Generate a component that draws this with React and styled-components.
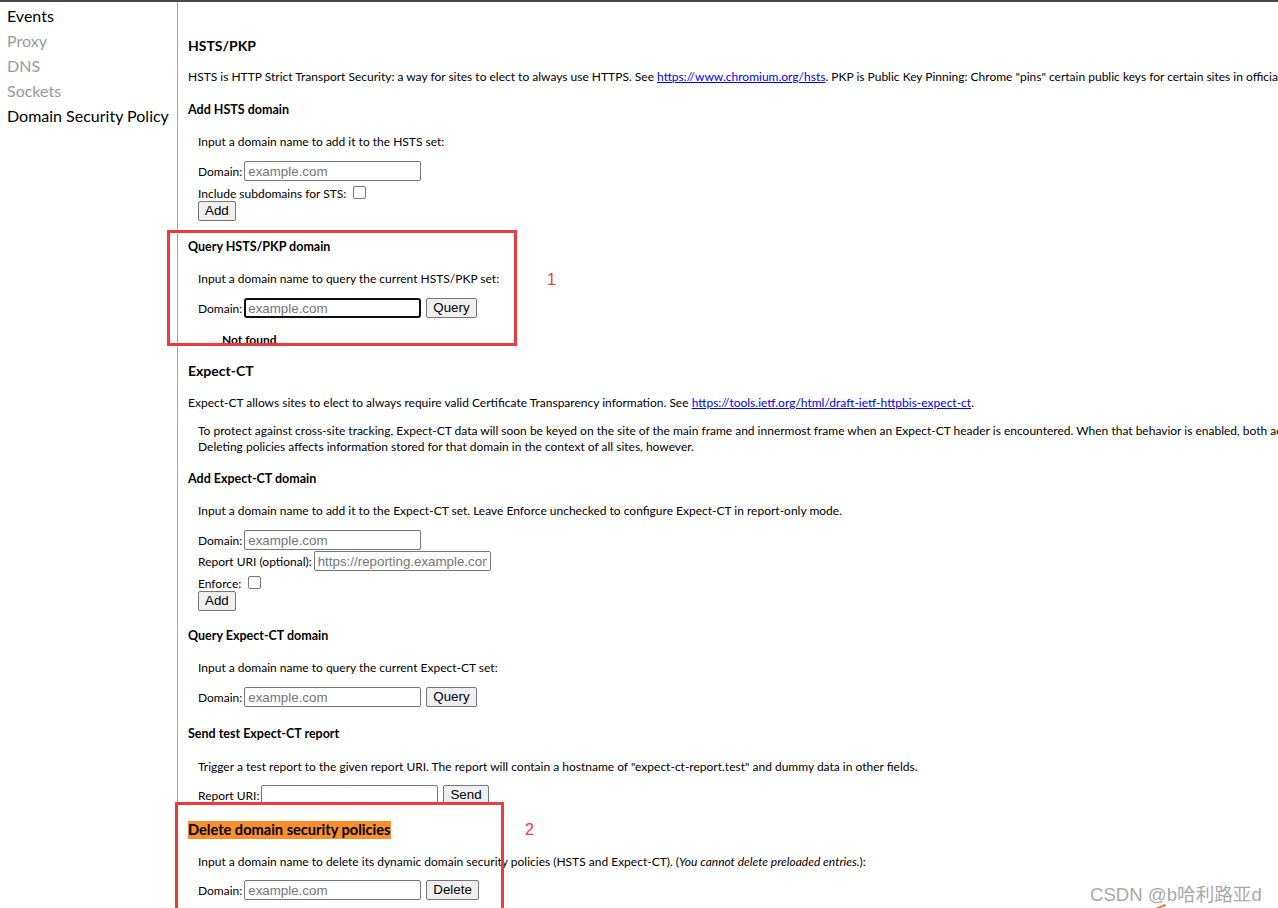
import React from "react";
import styled, { createGlobalStyle } from "styled-components";

const Global = createGlobalStyle`
  html, body { margin: 0; padding: 0; background: #fff; }
  body { overflow: hidden; width: 1278px; height: 908px; }
  * { box-sizing: border-box; }
`;

const UI = `"Lato", "Noto Sans", sans-serif`;
const CTRL = `"Liberation Sans", Arial, sans-serif`;

const Page = styled.div`
  position: relative;
  width: 1278px;
  height: 908px;
  border-top: 2px solid #4a4a4a;
  display: flex;
  overflow: hidden;
  font-family: ${UI};
  color: #000;
`;

const Sidebar = styled.nav`
  flex: 0 0 178px;
  border-right: 1px solid #a8a8a8;
  padding: 1px 0 0 7px;
  display: flex;
  flex-direction: column;
`;

const NavItem = styled.div`
  font-size: 16px;
  line-height: 25px;
  color: ${(p) => (p.$muted ? "#9a9a9a" : "#000")};
  white-space: nowrap;
`;

const Main = styled.main`
  flex: 1;
  padding-left: 10px;
  display: flex;
  flex-direction: column;
  align-items: flex-start;
  white-space: nowrap;
  font-size: 12px;
`;

const H2 = styled.h2`
  margin: ${(p) => p.$mt}px 0 0;
  font-size: 14px;
  line-height: 18px;
  font-weight: 700;
`;

const H3 = styled.h3`
  margin: ${(p) => p.$mt}px 0 0;
  font-size: ${(p) => (p.$hl ? "14.6px" : "12.5px")};
  line-height: 18px;
  height: 18px;
  font-weight: 700;
  background: ${(p) => (p.$hl ? "#fb8f2e" : "transparent")};
`;

const P = styled.p`
  margin: ${(p) => p.$mt}px 0 0;
  padding-left: ${(p) => (p.$indent ? 10 : 0)}px;
  font-size: 12px;
  line-height: 16px;
`;

const Link = styled.a`
  color: #0000ee;
  text-decoration: underline;
`;

const Row = styled.div`
  margin-top: ${(p) => p.$mt || 0}px;
  padding-left: 10px;
  display: flex;
  align-items: center;
  height: 20px;
  font-size: 12px;
`;

const Label = styled.span`
  margin-right: 2px;
`;

const TextInput = styled.input`
  width: 177px;
  height: 20px;
  border: 1px solid #767676;
  border-radius: 2px;
  padding: 1px 3px;
  font-family: ${CTRL};
  font-size: 13.33px;
  color: #000;
  background: #fff;
  outline: none;
  ${(p) =>
    p.$focus &&
    `
    border: 2px solid #101010;
    border-radius: 3px;
    padding: 0 2px;
  `}
  &::placeholder { color: #757575; }
`;

const Button = styled.button`
  margin-left: ${(p) => p.$ml || 0}px;
  height: 20px;
  padding: 0 6px;
  border: 1px solid #767676;
  border-radius: 2px;
  background: #efefef;
  font-family: ${CTRL};
  font-size: 13.33px;
  color: #000;
  line-height: 16px;
`;

const Check = styled.span`
  display: inline-block;
  width: 13px;
  height: 13px;
  margin: 0 0 2px 7px;
  border: 1px solid #767676;
  border-radius: 2px;
  background: #fff;
`;

const CheckRow = styled.div`
  padding: 4px 0 0 10px;
  height: 20px;
  display: flex;
  align-items: center;
  font-size: 12px;
`;

const Status = styled.div`
  margin-top: 14px;
  padding-left: 34px;
  font-weight: 700;
  font-size: 12px;
  line-height: 16px;
`;

const RedBox = styled.div`
  position: absolute;
  border: 3px solid #f03a3a;
  pointer-events: none;
`;

const Mark = styled.div`
  position: absolute;
  color: #f03a3a;
  font-family: "Liberation Sans", Arial, sans-serif;
  font-size: 16px;
`;

const Watermark = styled.div`
  position: absolute;
  left: 1090px;
  top: 877px;
  font-family: "Liberation Sans", "Noto Sans CJK SC", sans-serif;
  font-size: 18.6px;
  color: #a9a9a9;
  text-shadow: 0 0 1px #fff;
  white-space: nowrap;
`;

const Arrow = styled.svg`
  position: absolute;
  left: 1140px;
  top: 898px;
`;

export default function App() {
  return (
    <>
      <Global />
      <Page>
        <Sidebar>
          <NavItem>Events</NavItem>
          <NavItem $muted>Proxy</NavItem>
          <NavItem $muted>DNS</NavItem>
          <NavItem $muted>Sockets</NavItem>
          <NavItem>Domain Security Policy</NavItem>
        </Sidebar>
        <Main>
          <H2 $mt={35}>HSTS/PKP</H2>
          <P $mt={14}>
            HSTS is HTTP Strict Transport Security: a way for sites to elect to always use HTTPS. See{" "}
            <Link>https://www.chromium.org/hsts</Link>. PKP is Public Key Pinning: Chrome "pins" certain
            public keys for certain sites in official builds.
          </P>
          <H3 $mt={16}>Add HSTS domain</H3>
          <P $indent $mt={15}>Input a domain name to add it to the HSTS set:</P>
          <Row $mt={11}>
            <Label>Domain:</Label>
            <TextInput placeholder="example.com" />
          </Row>
          <CheckRow>
            Include subdomains for STS:
            <Check />
          </CheckRow>
          <Row>
            <Button>Add</Button>
          </Row>

          <H3 $mt={17}>Query HSTS/PKP domain</H3>
          <P $indent $mt={15}>Input a domain name to query the current HSTS/PKP set:</P>
          <Row $mt={11}>
            <Label>Domain:</Label>
            <TextInput $focus placeholder="example.com" />
            <Button $ml={5}>Query</Button>
          </Row>
          <Status>Not found</Status>

          <H2 $mt={14}>Expect-CT</H2>
          <P $mt={15}>
            Expect-CT allows sites to elect to always require valid Certificate Transparency information. See{" "}
            <Link>https://tools.ietf.org/html/draft-ietf-httpbis-expect-ct</Link>.
          </P>
          <P $indent $mt={12}>
            To protect against cross-site tracking, Expect-CT data will soon be keyed on the site of the main frame and
            innermost frame when an Expect-CT header is encountered. When that behavior is enabled, both adding and
            querying policies will only work with data keyed on an empty site.
            <br />
            Deleting policies affects information stored for that domain in the context of all sites, however.
          </P>
          <H3 $mt={15}>Add Expect-CT domain</H3>
          <P $indent $mt={15}>
            Input a domain name to add it to the Expect-CT set. Leave Enforce unchecked to configure Expect-CT in
            report-only mode.
          </P>
          <Row $mt={11}>
            <Label>Domain:</Label>
            <TextInput placeholder="example.com" />
          </Row>
          <Row $mt={1}>
            <Label>Report URI (optional):</Label>
            <TextInput placeholder="https://reporting.example.com" />
          </Row>
          <CheckRow>
            Enforce:
            <Check />
          </CheckRow>
          <Row>
            <Button>Add</Button>
          </Row>

          <H3 $mt={16}>Query Expect-CT domain</H3>
          <P $indent $mt={15}>Input a domain name to query the current Expect-CT set:</P>
          <Row $mt={11}>
            <Label>Domain:</Label>
            <TextInput placeholder="example.com" />
            <Button $ml={5}>Query</Button>
          </Row>

          <H3 $mt={18}>Send test Expect-CT report</H3>
          <P $indent $mt={16}>
            Trigger a test report to the given report URI. The report will contain a hostname of
            "expect-ct-report.test" and dummy data in other fields.
          </P>
          <Row $mt={10}>
            <Label>Report URI:</Label>
            <TextInput />
            <Button $ml={5}>Send</Button>
          </Row>

          <H3 $mt={16} $hl>Delete domain security policies</H3>
          <P $indent $mt={15}>
            Input a domain name to delete its dynamic domain security policies (HSTS and Expect-CT). (
            <em>You cannot delete preloaded entries.</em>):
          </P>
          <Row $mt={10}>
            <Label>Domain:</Label>
            <TextInput placeholder="example.com" />
            <Button $ml={5}>Delete</Button>
          </Row>
        </Main>

        <RedBox style={{ left: 167, top: 228, width: 350, height: 116 }} />
        <Mark style={{ left: 547, top: 269 }}>1</Mark>
        <RedBox style={{ left: 175, top: 800, width: 329, height: 109 }} />
        <Mark style={{ left: 525, top: 819 }}>2</Mark>
        <Watermark>CSDN @b哈利路亚d</Watermark>
        <Arrow width="40" height="12" viewBox="0 0 40 12">
          <path d="M6 12 L26 6 L25 4 Z" fill="#f2642e" />
        </Arrow>
      </Page>
    </>
  );
}
